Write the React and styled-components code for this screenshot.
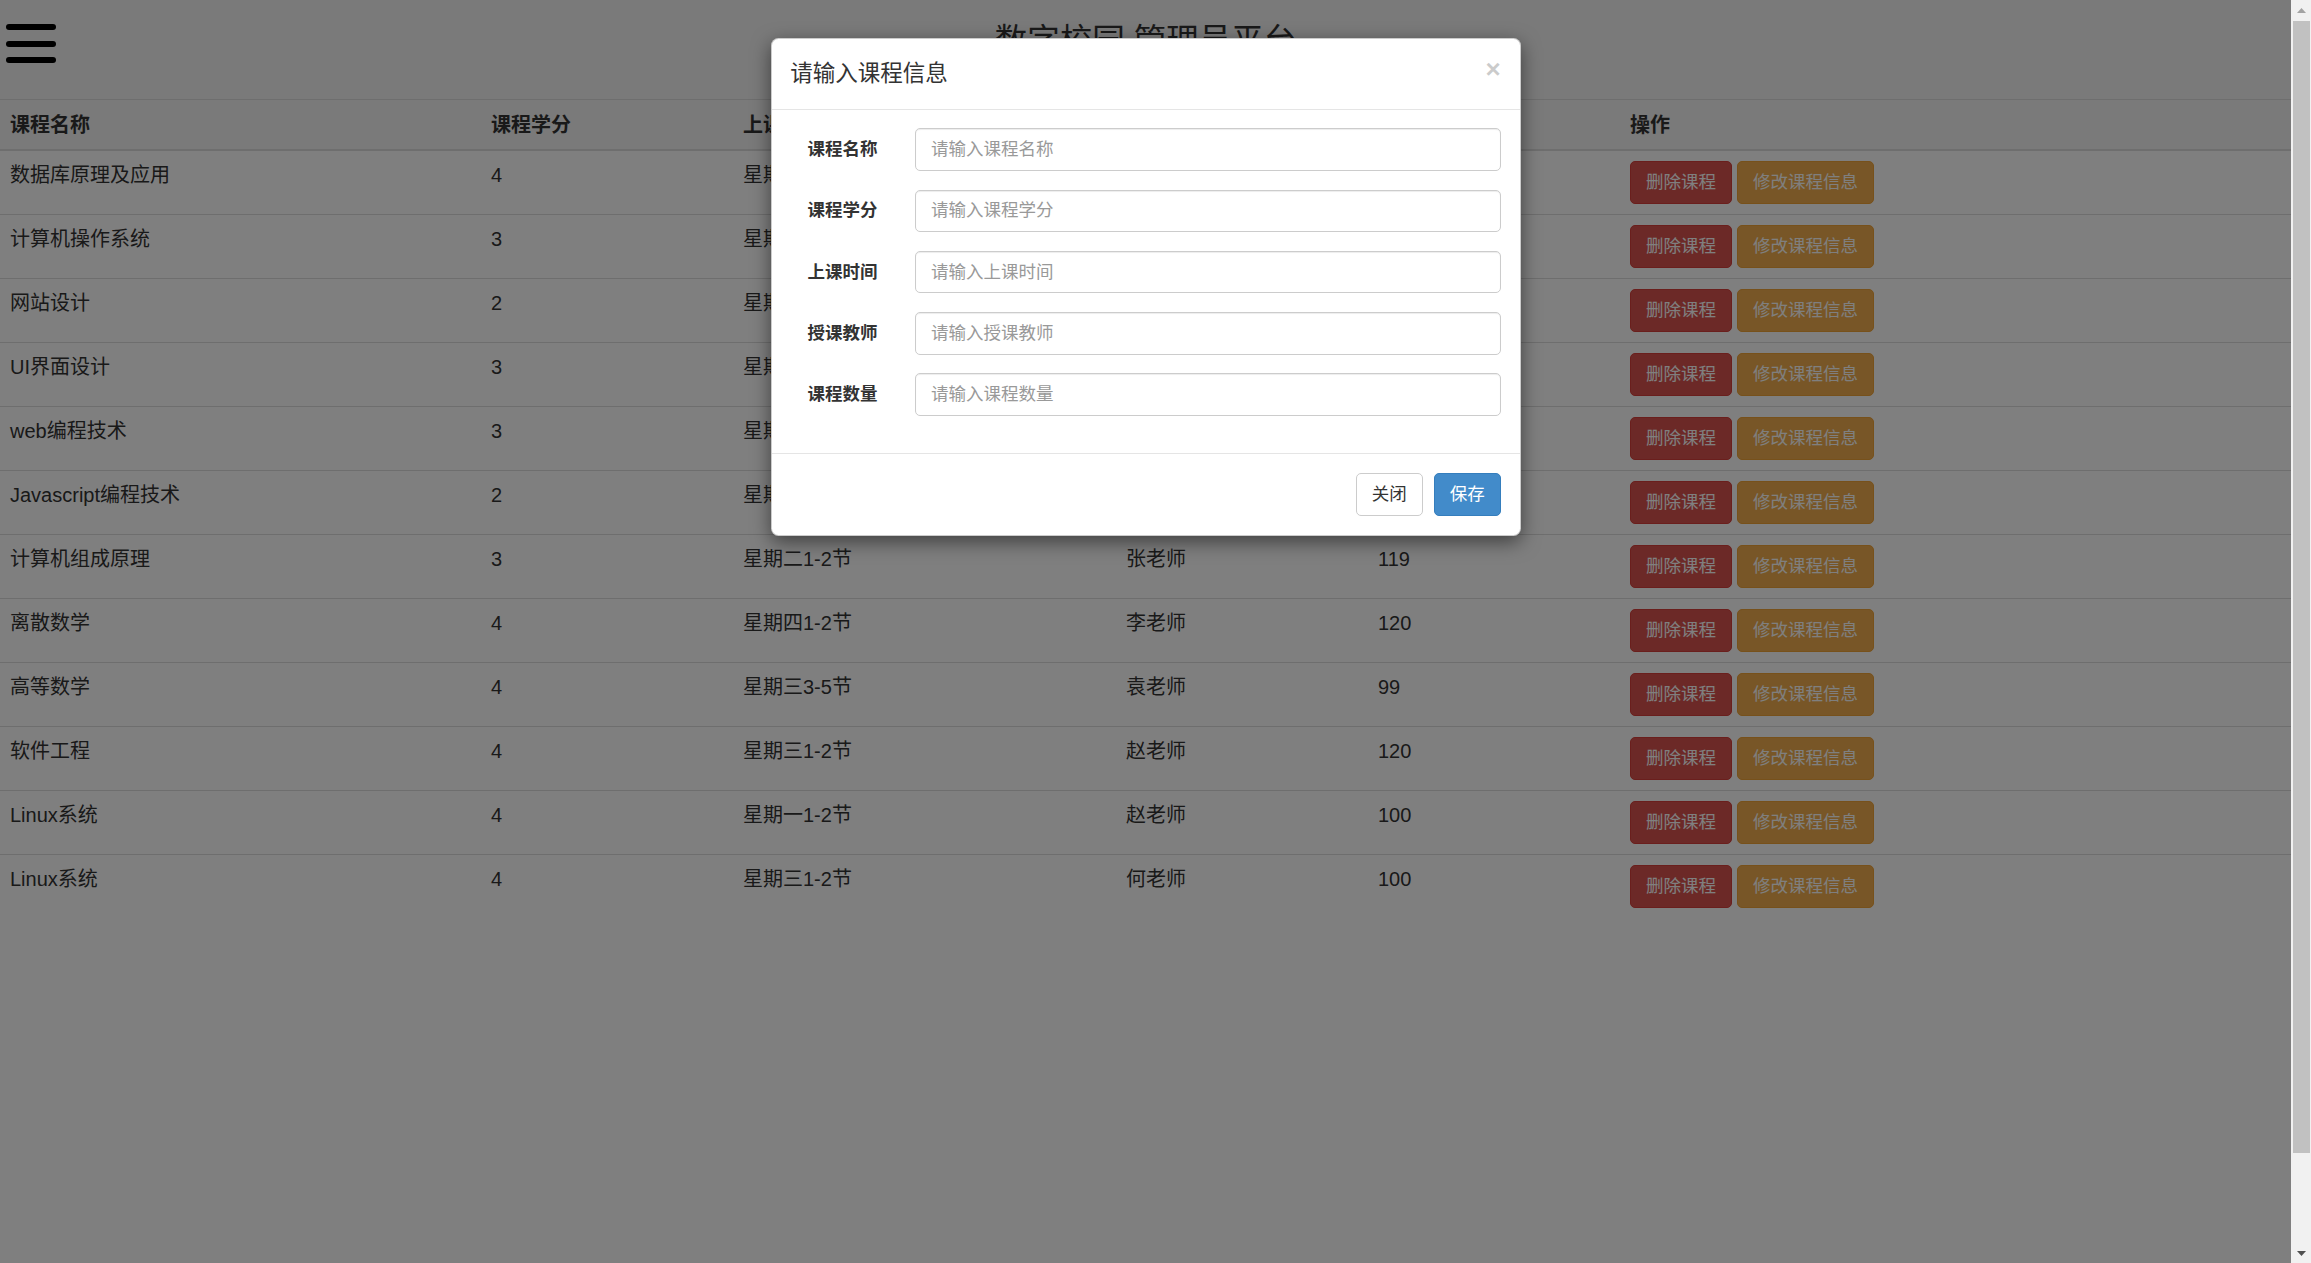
import React, { useState } from 'react'
import styled, { createGlobalStyle } from 'styled-components'

const GlobalStyle = createGlobalStyle`
  html, body {
    margin: 0;
    padding: 0;
    height: 100%;
    overflow: hidden;
  }
  body {
    font-family: "Liberation Sans", "Noto Sans CJK SC", sans-serif;
    font-size: 17.5px;
    line-height: 1.42857;
    color: #333;
    background: #fff;
  }
  * { box-sizing: border-box; }
`

const courses = [
  { name: '数据库原理及应用', credit: 4, time: '星期一1-2节', teacher: '王老师', count: 120 },
  { name: '计算机操作系统', credit: 3, time: '星期二3-4节', teacher: '刘老师', count: 110 },
  { name: '网站设计', credit: 2, time: '星期五1-2节', teacher: '陈老师', count: 90 },
  { name: 'UI界面设计', credit: 3, time: '星期四3-4节', teacher: '周老师', count: 100 },
  { name: 'web编程技术', credit: 3, time: '星期一3-4节', teacher: '孙老师', count: 120 },
  { name: 'Javascript编程技术', credit: 2, time: '星期五3-4节', teacher: '吴老师', count: 80 },
  { name: '计算机组成原理', credit: 3, time: '星期二1-2节', teacher: '张老师', count: 119 },
  { name: '离散数学', credit: 4, time: '星期四1-2节', teacher: '李老师', count: 120 },
  { name: '高等数学', credit: 4, time: '星期三3-5节', teacher: '袁老师', count: 99 },
  { name: '软件工程', credit: 4, time: '星期三1-2节', teacher: '赵老师', count: 120 },
  { name: 'Linux系统', credit: 4, time: '星期一1-2节', teacher: '赵老师', count: 100 },
  { name: 'Linux系统', credit: 4, time: '星期三1-2节', teacher: '何老师', count: 100 },
]

const fields = [
  { label: '课程名称', key: 'name' },
  { label: '课程学分', key: 'credit' },
  { label: '上课时间', key: 'time' },
  { label: '授课教师', key: 'teacher' },
  { label: '课程数量', key: 'count' },
]

const Shell = styled.div`
  display: flex;
  height: 100vh;
  width: 100vw;
`

const Page = styled.div`
  position: relative;
  flex: 1;
  min-width: 0;
  overflow: hidden;
`

const TopBar = styled.div`
  display: grid;
  grid-template-columns: 1fr auto 1fr;
  align-items: start;
  height: 100px;
  background: #f4f4f4;
  border-bottom: 1px solid #ddd;
`

const Burger = styled.div`
  display: flex;
  flex-direction: column;
  gap: 10.5px;
  margin: 24px 0 0 6px;
`

const BurgerBar = styled.span`
  display: block;
  width: 50px;
  height: 6px;
  border-radius: 3px;
  background: #000;
`

const Title = styled.h1`
  margin: 24px 0 0;
  font-size: 32.5px;
  font-weight: 400;
  line-height: 1.1;
  color: #333;
`

const Table = styled.table`
  width: 100%;
  border-collapse: collapse;
  table-layout: fixed;
  font-size: 20px;
`

const HeadRow = styled.tr`
  background: #f4f4f4;
`

const Th = styled.th`
  text-align: left;
  padding: 10.5px 10px 10px;
  font-weight: 700;
  line-height: 28px;
  border-bottom: 2px solid #ddd;
  vertical-align: bottom;
`

const Td = styled.td`
  padding: 10px;
  line-height: 28.5px;
  vertical-align: top;
  border-top: 1px solid #ddd;
  white-space: nowrap;
`

const Actions = styled.div`
  display: flex;
  gap: 5px;
`

const Btn = styled.button`
  font-family: inherit;
  font-size: 17.5px;
  line-height: 25px;
  padding: 8px 15px;
  border-radius: 5px;
  border: 1px solid ${p => p.$border};
  background: ${p => p.$bg};
  color: ${p => p.$color || '#fff'};
  cursor: pointer;
  white-space: nowrap;
`

const Backdrop = styled.div`
  position: absolute;
  inset: 0;
  background: rgba(0, 0, 0, 0.5);
`

const ModalLayer = styled.div`
  position: absolute;
  inset: 0;
  display: flex;
  justify-content: center;
  align-items: flex-start;
  padding-top: 38px;
`

const Dialog = styled.div`
  width: 750px;
  background: #fff;
  border: 1px solid rgba(0, 0, 0, 0.2);
  border-radius: 7.5px;
  box-shadow: 0 6px 19px rgba(0, 0, 0, 0.5);
`

const ModalHeader = styled.div`
  display: flex;
  justify-content: space-between;
  align-items: flex-start;
  padding: 18.75px;
  border-bottom: 1.25px solid #e5e5e5;
`

const ModalTitle = styled.h4`
  margin: 0;
  font-size: 22.5px;
  font-weight: 400;
  line-height: 32px;
  color: #333;
`

const Close = styled.button`
  border: 0;
  background: none;
  padding: 0;
  margin-top: -2px;
  font-family: "Liberation Sans", sans-serif;
  font-size: 26px;
  font-weight: 700;
  line-height: 1;
  color: #000;
  opacity: 0.2;
  cursor: pointer;
`

const ModalBody = styled.form`
  display: flex;
  flex-direction: column;
  gap: 18.75px;
  padding: 18.75px 18.75px 37.5px;
`

const FormRow = styled.div`
  display: grid;
  grid-template-columns: 124.7px 1fr;
  margin: 0 -18.75px;
`

const Label = styled.label`
  padding: 8.75px 18.75px 0;
  text-align: right;
  font-weight: 700;
  line-height: 25px;
  color: #333;
`

const InputWrap = styled.div`
  padding: 0 18.75px;
`

const Input = styled.input`
  display: block;
  width: 100%;
  height: 42.5px;
  padding: 7.5px 15px;
  font-family: inherit;
  font-size: 17.5px;
  color: #555;
  border: 1.25px solid #ccc;
  border-radius: 5px;
  box-shadow: inset 0 1px 1px rgba(0, 0, 0, 0.075);
  outline: none;
  &::placeholder { color: #999; }
`

const ModalFooter = styled.div`
  display: flex;
  justify-content: flex-end;
  gap: 11px;
  padding: 18.75px;
  border-top: 1.25px solid #e5e5e5;
`

const ScrollRail = styled.div`
  width: 20px;
  flex: none;
  display: flex;
  flex-direction: column;
  align-items: stretch;
  background: #f1f1f1;
`

const Arrow = styled.div`
  height: 20px;
  flex: none;
  display: flex;
  justify-content: center;
  align-items: center;
  padding-left: 1px;
`

const Thumb = styled.div`
  height: 1132px;
  margin: 1px 1px 0 2px;
  background: #c1c1c1;
`

const Spacer = styled.div`
  flex: 1;
`

const Tri = ({ up, color }) => (
  <svg width="9" height="5" viewBox="0 0 9 5">
    <polygon points={up ? '0,5 4.5,0 9,5' : '0,0 9,0 4.5,5'} fill={color} />
  </svg>
)

export default function App() {
  const [form, setForm] = useState({})

  const handleChange = key => e => setForm({ ...form, [key]: e.target.value })

  return (
    <>
      <GlobalStyle />
      <Shell>
        <Page>
          <TopBar>
            <Burger>
              <BurgerBar />
              <BurgerBar />
              <BurgerBar />
            </Burger>
            <Title>数字校园 管理员平台</Title>
            <div />
          </TopBar>

          <Table>
            <colgroup>
              <col style={{ width: 481 }} />
              <col style={{ width: 252 }} />
              <col style={{ width: 383 }} />
              <col style={{ width: 252 }} />
              <col style={{ width: 252 }} />
              <col />
            </colgroup>
            <thead>
              <HeadRow>
                <Th>课程名称</Th>
                <Th>课程学分</Th>
                <Th>上课时间</Th>
                <Th>授课教师</Th>
                <Th>课程数量</Th>
                <Th>操作</Th>
              </HeadRow>
            </thead>
            <tbody>
              {courses.map((c, i) => (
                <tr key={i}>
                  <Td>{c.name}</Td>
                  <Td>{c.credit}</Td>
                  <Td>{c.time}</Td>
                  <Td>{c.teacher}</Td>
                  <Td>{c.count}</Td>
                  <Td>
                    <Actions>
                      <Btn $bg="#d9534f" $border="#d43f3a">删除课程</Btn>
                      <Btn $bg="#f0ad4e" $border="#eea236">修改课程信息</Btn>
                    </Actions>
                  </Td>
                </tr>
              ))}
            </tbody>
          </Table>

          <Backdrop />
          <ModalLayer>
            <Dialog>
              <ModalHeader>
                <ModalTitle>请输入课程信息</ModalTitle>
                <Close type="button">×</Close>
              </ModalHeader>
              <ModalBody onSubmit={e => e.preventDefault()}>
                {fields.map(f => (
                  <FormRow key={f.key}>
                    <Label>{f.label}</Label>
                    <InputWrap>
                      <Input
                        placeholder={'请输入' + f.label}
                        value={form[f.key] || ''}
                        onChange={handleChange(f.key)}
                      />
                    </InputWrap>
                  </FormRow>
                ))}
              </ModalBody>
              <ModalFooter>
                <Btn $bg="#fff" $border="#ccc" $color="#333">关闭</Btn>
                <Btn $bg="#428bca" $border="#357ebd">保存</Btn>
              </ModalFooter>
            </Dialog>
          </ModalLayer>
        </Page>
        <ScrollRail>
          <Arrow><Tri up color="#a3a3a3" /></Arrow>
          <Thumb />
          <Spacer />
          <Arrow><Tri color="#505050" /></Arrow>
        </ScrollRail>
      </Shell>
    </>
  )
}
